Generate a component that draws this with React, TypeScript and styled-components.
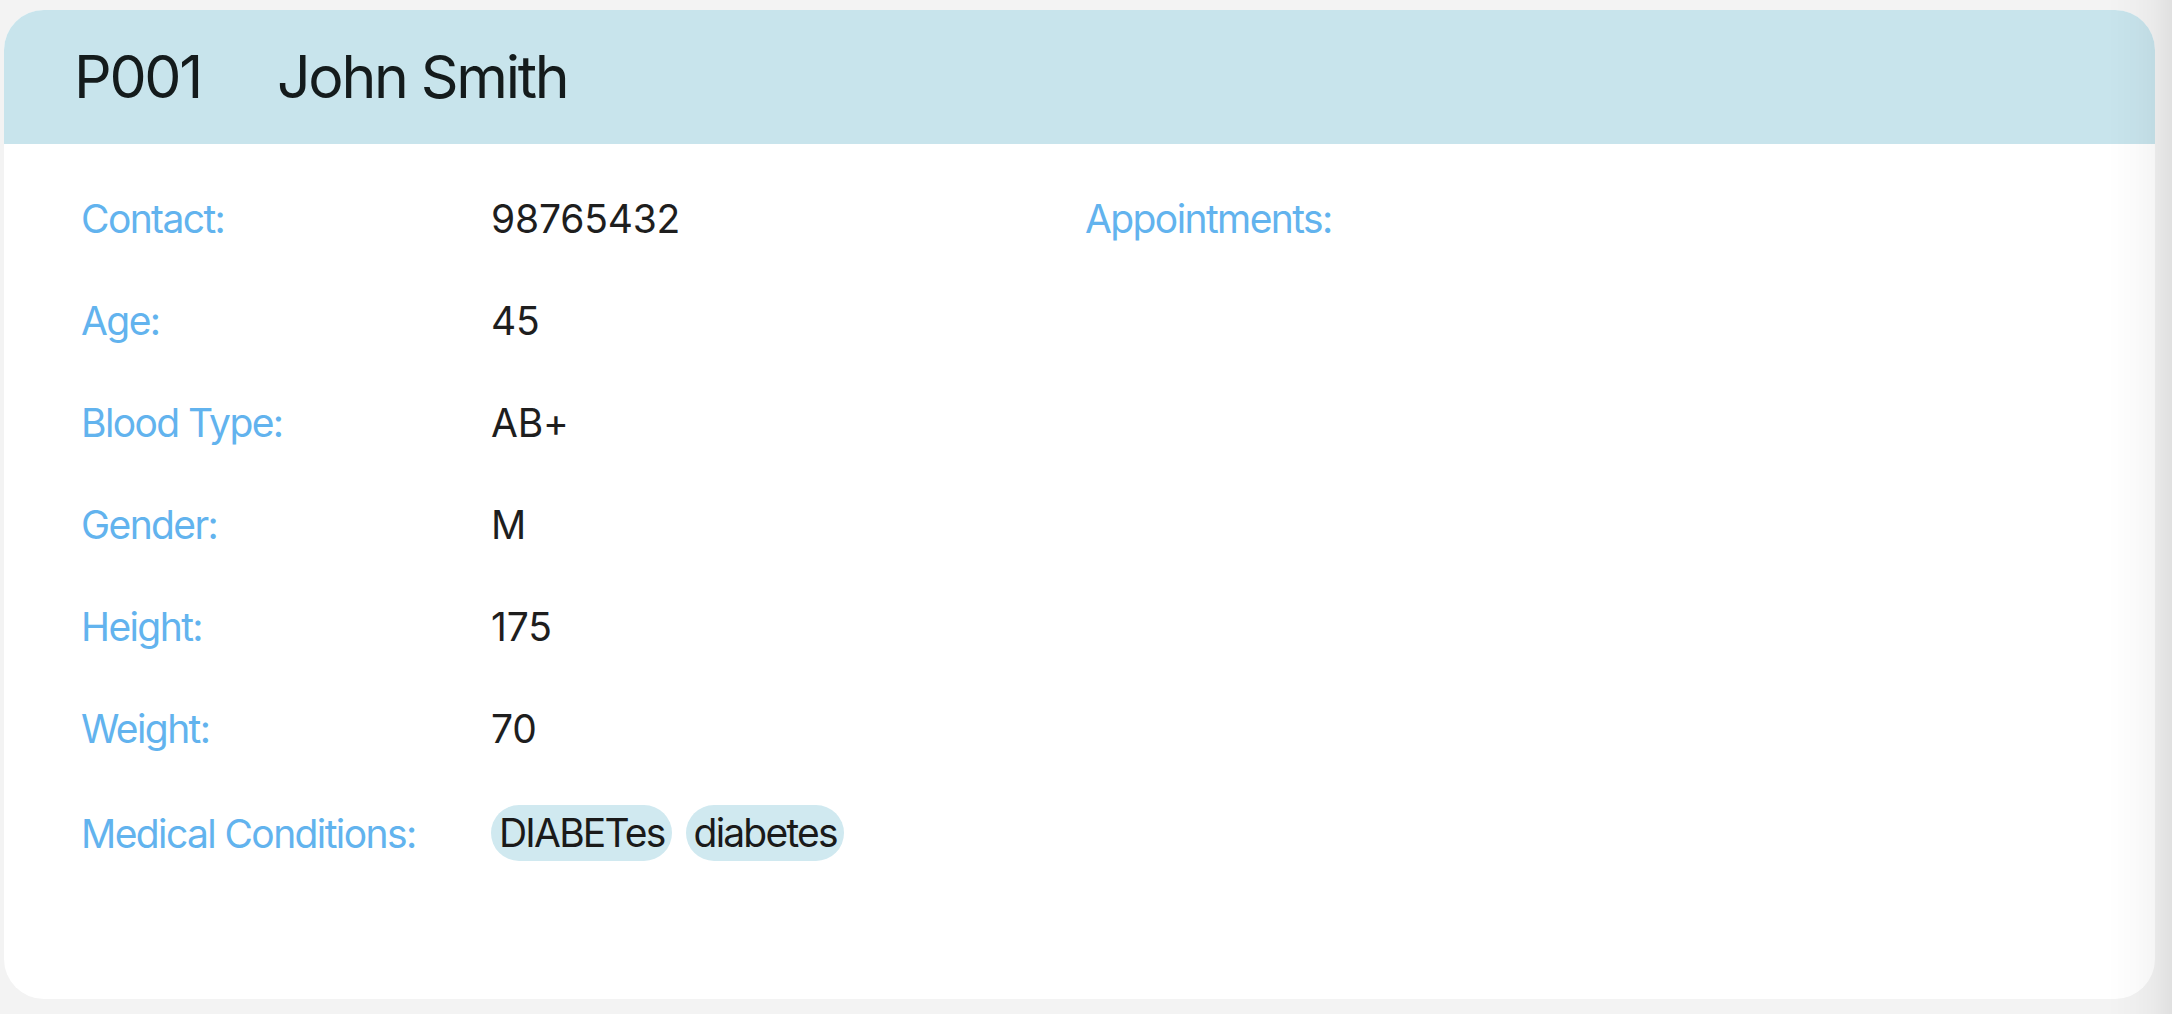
import React from "react";
import styled, { createGlobalStyle } from "styled-components";

const GlobalStyle = createGlobalStyle`
  html, body {
    margin: 0;
    padding: 0;
    background: #f3f3f3;
    font-family: Inter, "Noto Sans", "Liberation Sans", sans-serif;
    overflow: hidden;
  }
`;

const Page = styled.div`
  width: 2172px;
  height: 1014px;
  box-sizing: border-box;
  padding: 10px 17px 15px 4px;
  display: flex;
  flex-direction: column;
`;

const Card = styled.section`
  flex: 1;
  background: #ffffff;
  border-radius: 40px;
  overflow: hidden;
  display: flex;
  flex-direction: column;
`;

const Header = styled.header`
  background: #c8e4ec;
  padding: 31px 70px;
  display: flex;
  align-items: center;
  gap: 76px;
  color: #141b1c;
  font-size: 59px;
  line-height: 72px;
  letter-spacing: -2.3px;
`;

const HeaderText = styled.span`
  white-space: nowrap;
`;

const Body = styled.div`
  padding: 51px 77px 0;
  display: grid;
  grid-template-columns: 1004px 1fr;
`;

const Fields = styled.div`
  display: grid;
  grid-template-columns: 410px auto;
  row-gap: 55px;
  align-items: center;
  justify-items: start;
`;

const Label = styled.div<{ $lift?: boolean }>`
  color: #62b3ee;
  font-size: 39px;
  line-height: 47px;
  letter-spacing: -1.6px;
  white-space: nowrap;
  margin-top: ${(p) => (p.$lift ? "-2px" : "0")};
`;

const Value = styled.div`
  color: #1e1e1e;
  font-size: 39px;
  line-height: 47px;
  letter-spacing: -0.2px;
  white-space: nowrap;
`;

const Chips = styled.div`
  display: flex;
  gap: 14px;
  margin-top: -2px;
`;

const Chip = styled.span`
  background: #d0e9f0;
  color: #1a1a1a;
  border-radius: 999px;
  padding: 4px 7px 5px 8px;
  font-size: 39px;
  line-height: 47px;
  letter-spacing: -1.8px;
  white-space: nowrap;
`;

const Side = styled.div`
  display: flex;
  flex-direction: column;
  align-items: flex-start;
`;

const EdgeShade = styled.div`
  position: fixed;
  top: 0;
  right: 0;
  width: 64px;
  height: 100%;
  pointer-events: none;
  background: linear-gradient(
    to right,
    rgba(0, 0, 0, 0) 0%,
    rgba(0, 0, 0, 0.015) 40%,
    rgba(0, 0, 0, 0.035) 70%,
    rgba(0, 0, 0, 0.075) 100%
  );
`;

const fields: { label: string; value: string }[] = [
  { label: "Contact:", value: "98765432" },
  { label: "Age:", value: "45" },
  { label: "Blood Type:", value: "AB+" },
  { label: "Gender:", value: "M" },
  { label: "Height:", value: "175" },
  { label: "Weight:", value: "70" },
];

const conditions = ["DIABETes", "diabetes"];

export default function App() {
  return (
    <>
      <GlobalStyle />
      <Page>
        <Card>
          <Header>
            <HeaderText>P001</HeaderText>
            <HeaderText>John Smith</HeaderText>
          </Header>
          <Body>
            <Fields>
              {fields.map((f) => (
                <React.Fragment key={f.label}>
                  <Label>{f.label}</Label>
                  <Value>{f.value}</Value>
                </React.Fragment>
              ))}
              <Label $lift>Medical Conditions:</Label>
              <Chips>
                {conditions.map((c) => (
                  <Chip key={c}>{c}</Chip>
                ))}
              </Chips>
            </Fields>
            <Side>
              <Label>Appointments:</Label>
            </Side>
          </Body>
        </Card>
      </Page>
      <EdgeShade />
    </>
  );
}
